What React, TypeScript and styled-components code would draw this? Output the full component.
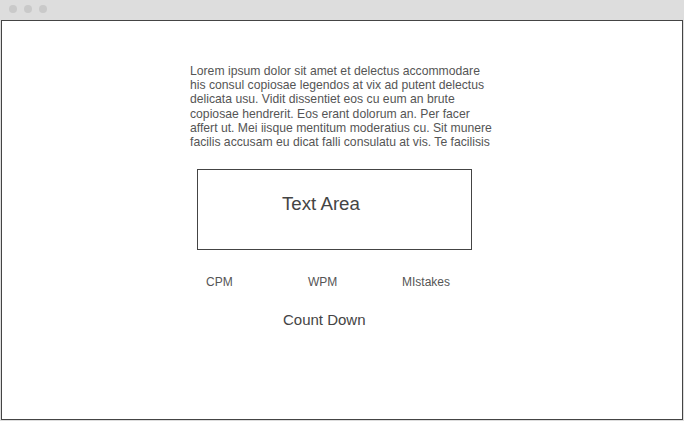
import React from "react";
import styled, { createGlobalStyle } from "styled-components";

const Global = createGlobalStyle`
  html, body { margin: 0; padding: 0; background: #dddddd; }
  body { font-family: "Liberation Sans", Arial, sans-serif; }
`;

const Window = styled.div`
  width: 684px;
  height: 421px;
  background: #dddddd;
  display: flex;
  flex-direction: column;
`;

const TitleBar = styled.div`
  height: 20px;
  display: flex;
  align-items: center;
  gap: 7px;
  padding-left: 9px;
  padding-bottom: 3px;
  box-sizing: border-box;
`;

const Dot = styled.span`
  width: 8px;
  height: 8px;
  border-radius: 50%;
  background: #c9c9c9;
`;

const Content = styled.div`
  margin-left: 1px;
  width: 682px;
  height: 400px;
  box-sizing: border-box;
  border: 1px solid #444444;
  background: #ffffff;
  padding: 43px 0 0 188px;
  display: flex;
  flex-direction: column;
  align-items: flex-start;
`;

const Paragraph = styled.p`
  margin: 0;
  width: 306px;
  font-size: 12.2px;
  line-height: 14.2px;
  color: #555555;
`;

const TextBox = styled.div`
  margin: 20px 0 0 7px;
  width: 275px;
  height: 81px;
  box-sizing: border-box;
  border: 1px solid #444444;
  padding: 23px 0 0 84px;
  font-size: 18.7px;
  line-height: 22px;
  color: #444444;
`;

const Stats = styled.div`
  margin: 25px 0 0 16px;
  display: grid;
  grid-template-columns: 102px 94px auto;
  font-size: 12px;
  line-height: 14px;
  color: #555555;
`;

const CountDown = styled.div`
  margin: 22px 0 0 93px;
  font-size: 15px;
  line-height: 17px;
  color: #444444;
`;

export default function App() {
  return (
    <>
      <Global />
      <Window>
        <TitleBar>
          <Dot />
          <Dot />
          <Dot />
        </TitleBar>
        <Content>
          <Paragraph>
            Lorem ipsum dolor sit amet et delectus accommodare his consul copiosae legendos at vix ad putent delectus delicata usu. Vidit dissentiet eos cu eum an brute copiosae hendrerit. Eos erant dolorum an. Per facer affert ut. Mei iisque mentitum moderatius cu. Sit munere facilis accusam eu dicat falli consulatu at vis. Te facilisis
          </Paragraph>
          <TextBox>Text Area</TextBox>
          <Stats>
            <span>CPM</span>
            <span>WPM</span>
            <span>MIstakes</span>
          </Stats>
          <CountDown>Count Down</CountDown>
        </Content>
      </Window>
    </>
  );
}
